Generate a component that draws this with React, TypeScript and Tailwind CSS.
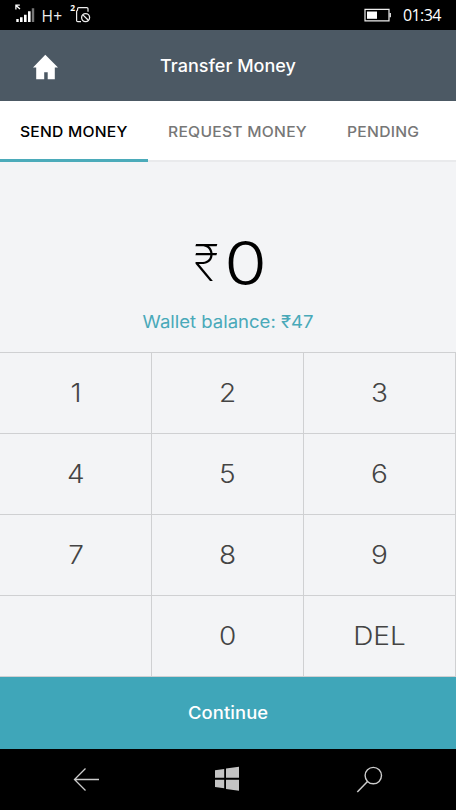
import React from "react";

const keys = ["1", "2", "3", "4", "5", "6", "7", "8", "9", "", "0", "DEL"];

function StatusBar() {
  return (
    <div className="flex h-[30px] items-center justify-between bg-black text-white">
      <div className="flex h-full items-center">
        <svg width="94" height="30" viewBox="0 0 94 30" fill="none">
          <path d="M15.3 5.2h4.5M15.9 5v4.4M16 5.4l4 3.6" stroke="#fff" strokeWidth="1.3" />
          <path d="M16.3 19h2.4v3h-2.4zM20 17.2h2.6V22H20zM24 14.7h2.6V22H24zM28 11.3h2.6V22H28z" fill="#fff" />
          <path d="M31.8 8.3h2.4V22h-2.4z" fill="#777" />
          <text x="41.5" y="22" fill="#eee" fontSize="15.5" fontFamily="Open Sans, sans-serif" textLength="20.5">H+</text>
          <text x="70.3" y="10.8" fill="#fff" fontSize="8.5" fontWeight="700" fontFamily="Open Sans, sans-serif">2</text>
          <path d="M81 21.7h-3.2q-1.2 0-1.2-1.2v-9.3l1-1.2V8.7q0-1.1 1.1-1.1h8.1q1.2 0 1.2 1.2v3" stroke="#eee" strokeWidth="1.2" />
          <circle cx="85.6" cy="17.6" r="4" stroke="#eee" strokeWidth="1.3" />
          <path d="m82.9 14.9 5.4 5.4" stroke="#eee" strokeWidth="1.3" />
        </svg>
      </div>
      <div className="flex items-center pr-[15px]">
        <svg width="28" height="14" viewBox="0 0 28 14" fill="none">
          <path d="M1 1.3h24v11.6H1z" stroke="#eee" strokeWidth="1.2" />
          <path d="M3 3.5h10v7.3H3z" fill="#fff" />
          <path d="M26.2 5v4.2" stroke="#eee" strokeWidth="1.4" />
        </svg>
        <span className="ml-[11px] w-[38px] whitespace-nowrap pt-px font-['Open_Sans',sans-serif] text-[16px] leading-[29px] tracking-[-0.6px]">01:34</span>
      </div>
    </div>
  );
}

function Header() {
  return (
    <header className="grid h-[71px] grid-cols-[90px_1fr_90px] items-center bg-[#4c5964] text-white">
      <svg className="ml-[33px] mt-[2px]" width="25" height="26" viewBox="0 0 25 26" fill="#fff">
        <path d="M12.3.7 25 13.5h-3.2v11.8h-7.1v-7.1h-3.5v7.1H3.2V13.5H0z" />
      </svg>
      <h1 className="scale-x-[1.06] whitespace-nowrap pt-[2px] text-center text-[17px] font-medium leading-[69px]">Transfer Money</h1>
    </header>
  );
}

function Tabs() {
  return (
    <nav className="flex h-[61px] border-b-2 border-[#e9eaec] bg-white text-[14.5px] font-medium leading-[61px] text-[#777]">
      <div className="h-[61px] w-[148px] shrink-0 whitespace-nowrap border-b-[3px] border-[#4babba] pl-[20px] text-black">
        <span className="inline-block origin-left scale-x-[1.08] tracking-[0.2px]">SEND MONEY</span>
      </div>
      <div className="w-[179px] shrink-0 whitespace-nowrap pl-[20px]">
        <span className="inline-block origin-left scale-x-[1.08] tracking-[0.24px]">REQUEST MONEY</span>
      </div>
      <div className="whitespace-nowrap pl-[20px]">
        <span className="inline-block origin-left scale-x-[1.08] tracking-[0.25px]">PENDING</span>
      </div>
    </nav>
  );
}

export default function App() {
  return (
    <main className="flex h-[810px] w-[456px] flex-col overflow-hidden bg-[#f3f4f6] font-['Inter',sans-serif]">
      <StatusBar />
      <Header />
      <Tabs />
      <section className="h-[190px] pt-[66px] text-center">
        <div className="flex h-[70px] items-center justify-center gap-[9px] pl-[2px] text-black">
          <span className="scale-x-[0.97] text-[50px] font-extralight leading-[70px]">₹</span>
          <span className="scale-x-[1.15] text-[60px] font-light leading-[70px]">0</span>
        </div>
        <p className="mt-[12px] scale-x-[1.06] text-[17.5px] leading-[24px] tracking-[-0.02px] text-[#49a9b9]">Wallet balance: ₹47</p>
      </section>
      <section className="grid h-[325px] shrink-0 grid-cols-3 border-t border-[#cfd0d2]">
        {keys.map((key, i) => (
          <div key={i} className="flex h-[81px] items-center justify-center border-b border-r border-[#cfd0d2] pt-[2px] text-[25px] font-light text-[#444]">
            <span className="scale-x-[1.12]">{key}</span>
          </div>
        ))}
      </section>
      <button className="h-[72px] shrink-0 bg-[#3fa6b9] pt-[2px] text-[17px] font-medium text-white">
        <span className="inline-block scale-x-[1.08] tracking-[0.1px]">Continue</span>
      </button>
      <footer className="h-[61px] shrink-0 bg-black">
        <svg width="456" height="61" viewBox="0 749 456 61" fill="none">
          <path d="M99 779.5H74.5M85.5 768.5l-11 11 11 11" stroke="#ccc" strokeWidth="1.3" />
          <path d="m215 770.3 9.2-1.3v8.7H215zM226 768.5l13-1.8v11h-13zM215 779.7h9.2v8.5l-9.2-1.2zM226 779.7h13v11l-13-1.8z" fill="#c4c4c4" />
          <circle cx="373.3" cy="775.6" r="8.2" stroke="#ccc" strokeWidth="1.4" />
          <path d="M367.5 781.5 357.3 792" stroke="#ccc" strokeWidth="1.5" />
        </svg>
      </footer>
    </main>
  );
}
